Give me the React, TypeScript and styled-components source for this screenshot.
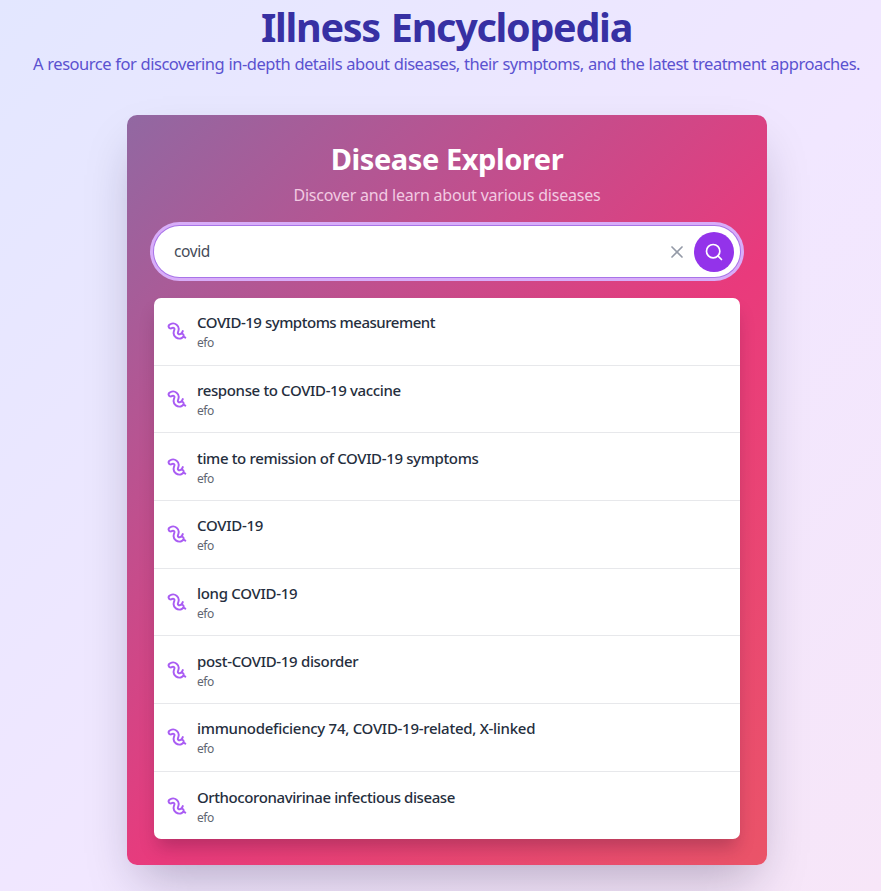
import React, { useState } from "react";
import styled, { createGlobalStyle } from "styled-components";
import { Search, Worm, X } from "lucide-react";

const GlobalStyle = createGlobalStyle`
  * { box-sizing: border-box; }
  body {
    margin: 0;
    font-family: "Noto Sans", "Open Sans", sans-serif;
  }
`;

const Page = styled.div`
  display: flex;
  flex-direction: column;
  align-items: center;
  height: 891px;
  padding-left: 12px;
  overflow: hidden;
  background: linear-gradient(135deg, #e3e7ff 0%, #f1e7ff 54%, #f7e6f8 100%);
`;

const Header = styled.header`
  height: 115px;
  padding-top: 3px;
  text-align: center;
  white-space: nowrap;
`;

const Title = styled.h1`
  margin: 0;
  font-size: 39.5px;
  font-weight: 700;
  line-height: 49px;
  letter-spacing: -1.28px;
  word-spacing: 2px;
  color: #3730a3;
`;

const Tagline = styled.p`
  margin: 0;
  font-size: 16.5px;
  line-height: 24px;
  letter-spacing: -0.49px;
  word-spacing: 0.5px;
  color: #5b52d0;
`;

const Card = styled.main`
  flex: none;
  width: 640px;
  height: 750px;
  margin-left: 1px;
  padding: 27px 27px 0;
  border-radius: 10px;
  background: linear-gradient(135deg, #9168a2 0%, #e93a7c 56%, #ea5468 100%);
  box-shadow: 0 24px 48px -12px rgba(20, 10, 50, 0.28);
`;

const CardHeader = styled.div`
  height: 84px;
  text-align: center;
`;

const CardTitle = styled.h2`
  margin: 0;
  font-size: 29px;
  font-weight: 700;
  line-height: 33px;
  letter-spacing: -0.43px;
  color: #fff;
`;

const CardSubtitle = styled.p`
  margin: 8px 0 0;
  font-size: 16px;
  line-height: 24px;
  letter-spacing: -0.21px;
  color: #f2cae2;
`;

const SearchBar = styled.form`
  display: flex;
  align-items: center;
  height: 51px;
  padding: 0 6px 0 20px;
  border-radius: 26px;
  background: #fff;
  box-shadow: 0 0 0 1px #a874e8, 0 0 0 4px #d8adf9;
`;

const SearchInput = styled.input`
  flex: 1;
  min-width: 0;
  padding: 0 0 2px;
  border: 0;
  outline: 0;
  background: none;
  font: 400 15.5px "Noto Sans", sans-serif;
  letter-spacing: -0.4px;
  color: #454b58;
`;

const ClearButton = styled.button`
  display: flex;
  margin-right: 7px;
  padding: 0;
  border: 0;
  background: none;
  color: #949aa7;
`;

const SearchButton = styled.button`
  display: grid;
  place-items: center;
  width: 40px;
  height: 40px;
  padding: 0;
  border: 0;
  border-radius: 50%;
  background: #9333ea;
  color: #fff;
`;

const Results = styled.ul`
  height: 540.5px;
  margin: 21px 0 0;
  padding: 0;
  list-style: none;
  overflow: hidden;
  border-radius: 7px;
  background: #fff;
  box-shadow: 0 12px 18px -4px rgba(40, 10, 40, 0.26);
`;

const ResultRow = styled.li`
  display: flex;
  align-items: center;
  gap: 10px;
  height: 67.7px;
  padding: 0 13px;
  border-bottom: 1px solid #e7e8eb;
  &:last-child { border-bottom: 0; }
`;

const ResultIcon = styled(Worm)`
  flex: none;
  color: #a95cf3;
`;

const ResultText = styled.div`
  padding-top: 3px;
`;

const ResultName = styled.div<{ $tracking: number }>`
  font-size: 15px;
  font-weight: 500;
  line-height: 21px;
  letter-spacing: ${(p) => p.$tracking}px;
  color: #252e3d;
`;

const ResultSource = styled.div`
  font-size: 12px;
  line-height: 20px;
  letter-spacing: -0.4px;
  color: #5f6672;
`;

const results = [
  { name: "COVID-19 symptoms measurement", tracking: -0.48 },
  { name: "response to COVID-19 vaccine", tracking: -0.36 },
  { name: "time to remission of COVID-19 symptoms", tracking: -0.36 },
  { name: "COVID-19", tracking: -0.29 },
  { name: "long COVID-19", tracking: -0.3 },
  { name: "post-COVID-19 disorder", tracking: -0.33 },
  { name: "immunodeficiency 74, COVID-19-related, X-linked", tracking: -0.28 },
  { name: "Orthocoronavirinae infectious disease", tracking: -0.41 },
];

export default function App() {
  const [query, setQuery] = useState("covid");
  return (
    <Page>
      <GlobalStyle />
      <Header>
        <Title>Illness Encyclopedia</Title>
        <Tagline>
          A resource for discovering in-depth details about diseases, their symptoms, and the latest treatment approaches.
        </Tagline>
      </Header>
      <Card>
        <CardHeader>
          <CardTitle>Disease Explorer</CardTitle>
          <CardSubtitle>Discover and learn about various diseases</CardSubtitle>
        </CardHeader>
        <SearchBar onSubmit={(e) => e.preventDefault()}>
          <SearchInput value={query} onChange={(e) => setQuery(e.target.value)} aria-label="Search diseases" />
          <ClearButton type="button" aria-label="Clear" onClick={() => setQuery("")}>
            <X size={20} strokeWidth={2} />
          </ClearButton>
          <SearchButton aria-label="Search">
            <Search size={20} strokeWidth={2} />
          </SearchButton>
        </SearchBar>
        <Results>
          {results.map((r) => (
            <ResultRow key={r.name}>
              <ResultIcon size={20} strokeWidth={2.3} />
              <ResultText>
                <ResultName $tracking={r.tracking}>{r.name}</ResultName>
                <ResultSource>efo</ResultSource>
              </ResultText>
            </ResultRow>
          ))}
        </Results>
      </Card>
    </Page>
  );
}
